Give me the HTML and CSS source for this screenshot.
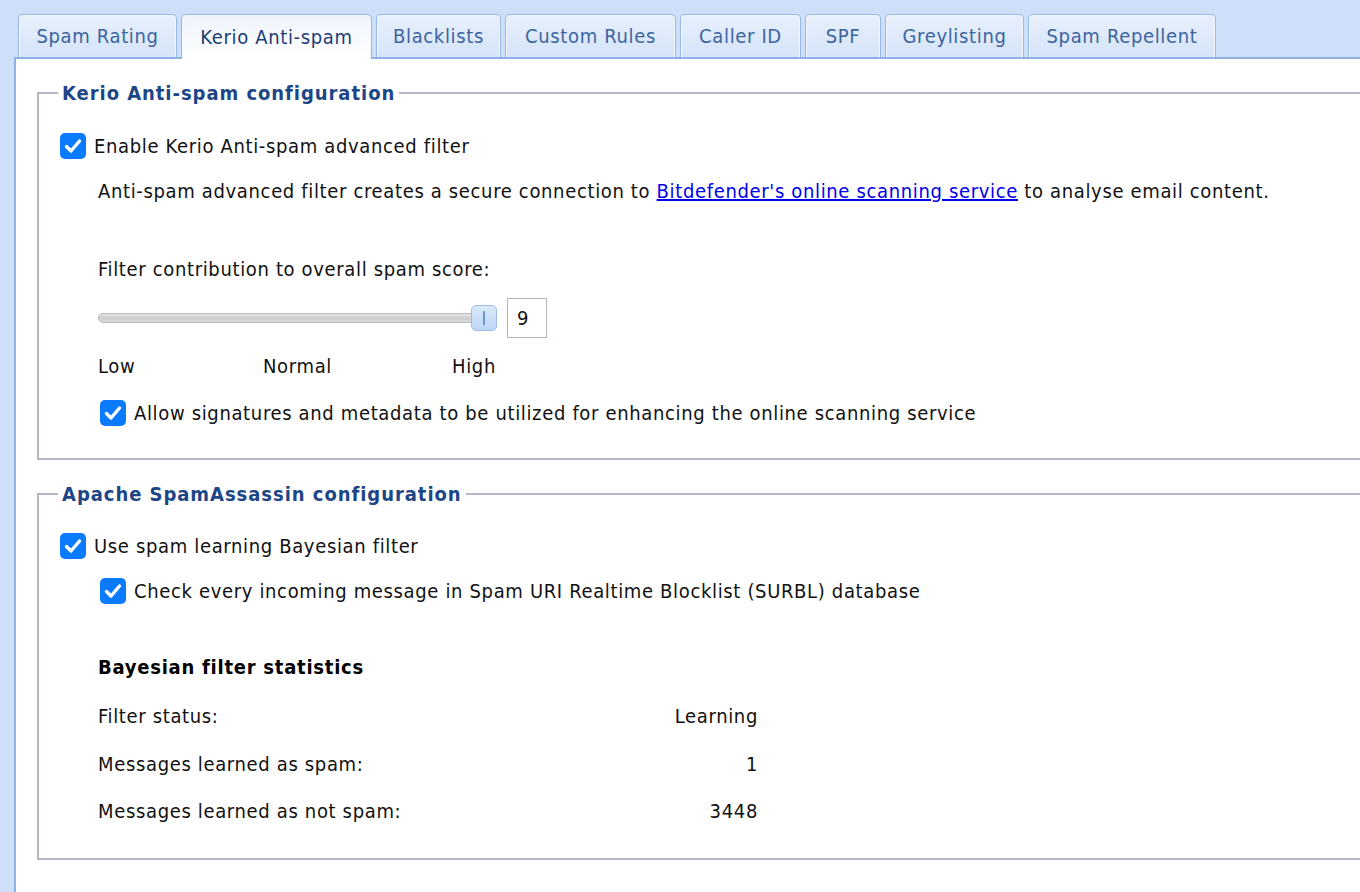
FILE: index.html
```html
<!DOCTYPE html>
<html lang="en">
<head>
<meta charset="utf-8">
<title>Spam Filter</title>
<link rel="stylesheet" href="styles.css">
</head>
<body>
<div class="tabbar">
  <div class="tab t1">Spam Rating</div>
  <div class="tab t2 active">Kerio Anti-spam</div>
  <div class="tab t3">Blacklists</div>
  <div class="tab t4">Custom Rules</div>
  <div class="tab t5">Caller ID</div>
  <div class="tab t6">SPF</div>
  <div class="tab t7">Greylisting</div>
  <div class="tab t8">Spam Repellent</div>
</div>
<div class="panel">
  <fieldset class="group group-kerio">
    <legend>Kerio Anti-spam configuration</legend>
    <label class="check row-first">
      <span class="box"><svg viewBox="0 0 26 26" width="26" height="26"><path d="M6.5 13.5 L11 18 L19.5 8" fill="none" stroke="#fff" stroke-width="3.4" stroke-linecap="round" stroke-linejoin="round"/></svg></span>
      <span>Enable Kerio Anti-spam advanced filter</span>
    </label>
    <p class="desc">Anti-spam advanced filter creates a secure connection to <a href="#">Bitdefender's online scanning service</a> to analyse email content.</p>
    <p class="slider-label">Filter contribution to overall spam score:</p>
    <div class="slider-row">
      <div class="slider">
        <div class="track"></div>
        <div class="thumb"><span class="grip"></span></div>
      </div>
      <div class="num">9</div>
    </div>
    <div class="scale">
      <span class="s-low">Low</span>
      <span class="s-normal">Normal</span>
      <span class="s-high">High</span>
    </div>
    <label class="check nested row-allow">
      <span class="box"><svg viewBox="0 0 26 26" width="26" height="26"><path d="M6.5 13.5 L11 18 L19.5 8" fill="none" stroke="#fff" stroke-width="3.4" stroke-linecap="round" stroke-linejoin="round"/></svg></span>
      <span>Allow signatures and metadata to be utilized for enhancing the online scanning service</span>
    </label>
  </fieldset>

  <fieldset class="group group-sa">
    <legend>Apache SpamAssassin configuration</legend>
    <label class="check row-first">
      <span class="box"><svg viewBox="0 0 26 26" width="26" height="26"><path d="M6.5 13.5 L11 18 L19.5 8" fill="none" stroke="#fff" stroke-width="3.4" stroke-linecap="round" stroke-linejoin="round"/></svg></span>
      <span>Use spam learning Bayesian filter</span>
    </label>
    <label class="check nested row-surbl">
      <span class="box"><svg viewBox="0 0 26 26" width="26" height="26"><path d="M6.5 13.5 L11 18 L19.5 8" fill="none" stroke="#fff" stroke-width="3.4" stroke-linecap="round" stroke-linejoin="round"/></svg></span>
      <span>Check every incoming message in Spam URI Realtime Blocklist (SURBL) database</span>
    </label>
    <h3 class="stats-title">Bayesian filter statistics</h3>
    <div class="stats">
      <span>Filter status:</span><span class="val">Learning</span>
      <span>Messages learned as spam:</span><span class="val">1</span>
      <span>Messages learned as not spam:</span><span class="val">3448</span>
    </div>
  </fieldset>
</div>
</body>
</html>
```

FILE: styles.css
```css
html, body {
  margin: 0;
  padding: 0;
  height: 100%;
  overflow: hidden;
}
body {
  background: #cddff9;
  font-family: "DejaVu Sans Condensed", "DejaVu Sans", sans-serif;
  font-size: 20px;
  line-height: 24px;
  letter-spacing: 0.65px;
  color: #111;
  display: flex;
  flex-direction: column;
}
.tabbar {
  display: flex;
  gap: 4px;
  padding: 14px 0 0 18px;
  height: 43px;
  flex: none;
}
.tab {
  box-sizing: border-box;
  height: 43px;
  display: flex;
  align-items: center;
  justify-content: center;
  border: 1px solid #98b8e6;
  border-bottom: none;
  border-radius: 5px 5px 0 0;
  background: linear-gradient(#e8f0fc, #d5e4f9);
  color: #3c64a0;
  box-shadow: inset 1px 1px 0 #f4f8fe, inset -1px 0 0 #f4f8fe;
  white-space: nowrap;
  position: relative;
}
.t1 { width: 159px; }
.t2 { width: 191px; }
.t3 { width: 125px; }
.t4 { width: 171px; }
.t5 { width: 121px; }
.t6 { width: 76px; }
.t7 { width: 139px; }
.t8 { width: 188px; }
.tab.active {
  background: linear-gradient(#eef4fd, #ffffff);
  color: #1c3f74;
  height: 45px;
  margin-bottom: -2px;
  z-index: 1;
}
.panel {
  flex: 1;
  margin-left: 14px;
  border-left: 2px solid #8fb2e6;
  border-top: 2px solid #8fb2e6;
  background: #fff;
  min-height: 0;
}
.group {
  margin: 22px -60px 0 21px;
  border: 2px solid #b5b7c9;
  padding: 0 0 32px 21px;
  min-width: 0;
}
.group-sa {
  padding-bottom: 35px;
}
.group legend {
  padding: 0 4px;
  margin-left: -2px;
  font-weight: bold;
  color: #1d4687;
  line-height: 24px;
  letter-spacing: 0.95px;
}
.check {
  display: flex;
  align-items: center;
  gap: 8px;
  height: 26px;
}
.check.nested {
  margin-left: 40px;
}
.box {
  width: 26px;
  height: 26px;
  border-radius: 5px;
  background: #0a7bff;
  display: block;
  flex: none;
}
.box svg { display: block; }
.row-first { margin-top: 28px; }
.group-sa .row-first { margin-top: 27px; }
.desc {
  margin: 20px 0 0 38px;
}
.desc a {
  color: #0000ee;
  text-decoration: underline;
}
.slider-label {
  margin: 54px 0 0 38px;
}
.slider-row {
  margin: 17px 0 0 38px;
  display: flex;
  align-items: center;
  gap: 10px;
  height: 40px;
}
.slider {
  width: 399px;
  height: 26px;
  position: relative;
}
.track {
  position: absolute;
  left: 0;
  right: 4px;
  top: 8px;
  height: 10px;
  border-radius: 5px;
  border: 1px solid #b8b8b8;
  background: linear-gradient(#e6e6e6, #cdcdcd 55%, #dcdcdc);
  box-sizing: border-box;
}
.thumb {
  position: absolute;
  right: 0;
  top: 0;
  width: 26px;
  height: 26px;
  box-sizing: border-box;
  border: 1px solid #9dbde9;
  border-radius: 5px;
  background: linear-gradient(#dbe9fb, #bcd5f6);
  display: flex;
  justify-content: center;
  align-items: center;
}
.grip {
  width: 2px;
  height: 14px;
  background: #6f95cf;
}
.num {
  width: 40px;
  height: 40px;
  box-sizing: border-box;
  border: 1px solid #b0b3c4;
  padding-left: 9px;
  display: flex;
  align-items: center;
}
.scale {
  margin: 16px 0 0 38px;
  display: flex;
}
.s-low { width: 165px; }
.s-normal { width: 189px; }
.row-allow { margin-top: 22px; }
.row-surbl { margin-top: 19px; }
.stats-title {
  margin: 51px 0 0 38px;
  font-size: 20px;
  line-height: 24px;
  font-weight: bold;
  letter-spacing: 0.75px;
  color: #000;
}
.stats {
  margin: 25px 0 0 38px;
  width: 660px;
  display: grid;
  grid-template-columns: 1fr auto;
  row-gap: 23.5px;
}
.val { text-align: right; }
```
